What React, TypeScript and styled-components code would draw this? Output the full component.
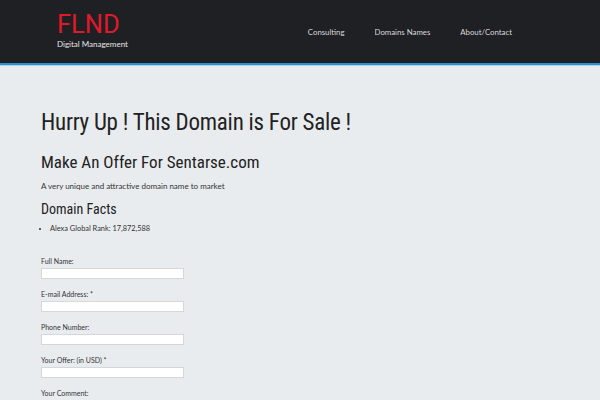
import React from "react";
import styled, { createGlobalStyle } from "styled-components";

const Global = createGlobalStyle`
  html, body { margin: 0; padding: 0; }
  body { background: #e9ecef; font-family: Lato, "Liberation Sans", sans-serif; color: #333; }
`;

const headFont = `Roboto, "Liberation Sans", sans-serif`;

const Header = styled.header`
  background: #1f2024;
  height: 63px;
  border-bottom: 2px solid #2f8fc9;
  box-shadow: 0 1px 0 #a9d3ec;
  display: flex;
  align-items: flex-start;
  justify-content: space-between;
  padding: 0 88px 0 57px;
`;

const Brand = styled.div`
  display: flex;
  flex-direction: column;
  padding-top: 10px;
`;

const Logo = styled.div`
  font-family: ${headFont};
  font-stretch: 90%;
  font-size: 25.5px;
  line-height: 28px;
  color: #e0192b;
`;

const Tagline = styled.div`
  font-size: 8px;
  color: #e6e6e6;
  margin-top: 1px;
`;

const Nav = styled.nav`
  display: flex;
  gap: 30px;
  padding-top: 27px;
`;

const NavLink = styled.a`
  font-size: 7.8px;
  color: #d8d8d8;
  text-decoration: none;
`;

const Main = styled.main`
  padding: 43px 41px 0;
`;

const H1 = styled.h1`
  font-family: ${headFont};
  font-stretch: condensed;
  font-weight: 400;
  font-size: 23px;
  letter-spacing: -0.25px;
  line-height: 30px;
  color: #222;
  margin: 0;
`;

const H2 = styled.h2`
  font-family: ${headFont};
  font-stretch: condensed;
  font-weight: 400;
  font-size: 17px;
  line-height: 22px;
  color: #222;
  margin: 13px 0 0;
`;

const P = styled.p`
  font-size: 8px;
  margin: 8px 0 0;
  color: #333;
`;

const H3 = styled.h3`
  font-family: ${headFont};
  font-stretch: condensed;
  font-weight: 400;
  font-size: 14px;
  line-height: 18px;
  color: #222;
  margin: 9px 0 0;
`;

const List = styled.ul`
  margin: 6px 0 0;
  padding-left: 9px;
  font-size: 7.4px;
  color: #333;
`;

const Form = styled.form`
  margin-top: 23px;
  display: flex;
  flex-direction: column;
  gap: 10px;
`;

const Field = styled.div`
  display: flex;
  flex-direction: column;
  gap: 2px;
`;

const Label = styled.label`
  font-size: 7px;
  color: #333;
  line-height: 10px;
`;

const Input = styled.input`
  width: 143px;
  height: 11px;
  box-sizing: border-box;
  border: 1px solid #d5d8db;
  background: #fff;
  padding: 0;
  margin: 0;
`;

export default function App() {
  return (
    <>
      <Global />
      <Header>
        <Brand>
          <Logo>FLND</Logo>
          <Tagline>Digital Management</Tagline>
        </Brand>
        <Nav>
          <NavLink href="#">Consulting</NavLink>
          <NavLink href="#">Domains Names</NavLink>
          <NavLink href="#">About/Contact</NavLink>
        </Nav>
      </Header>
      <Main>
        <H1>Hurry Up ! This Domain is For Sale !</H1>
        <H2>Make An Offer For Sentarse.com</H2>
        <P>A very unique and attractive domain name to market</P>
        <H3>Domain Facts</H3>
        <List>
          <li>Alexa Global Rank: 17,872,588</li>
        </List>
        <Form>
          <Field>
            <Label>Full Name:</Label>
            <Input />
          </Field>
          <Field>
            <Label>E-mail Address: *</Label>
            <Input />
          </Field>
          <Field>
            <Label>Phone Number:</Label>
            <Input />
          </Field>
          <Field>
            <Label>Your Offer: (in USD) *</Label>
            <Input />
          </Field>
          <Field>
            <Label>Your Comment:</Label>
          </Field>
        </Form>
      </Main>
    </>
  );
}
